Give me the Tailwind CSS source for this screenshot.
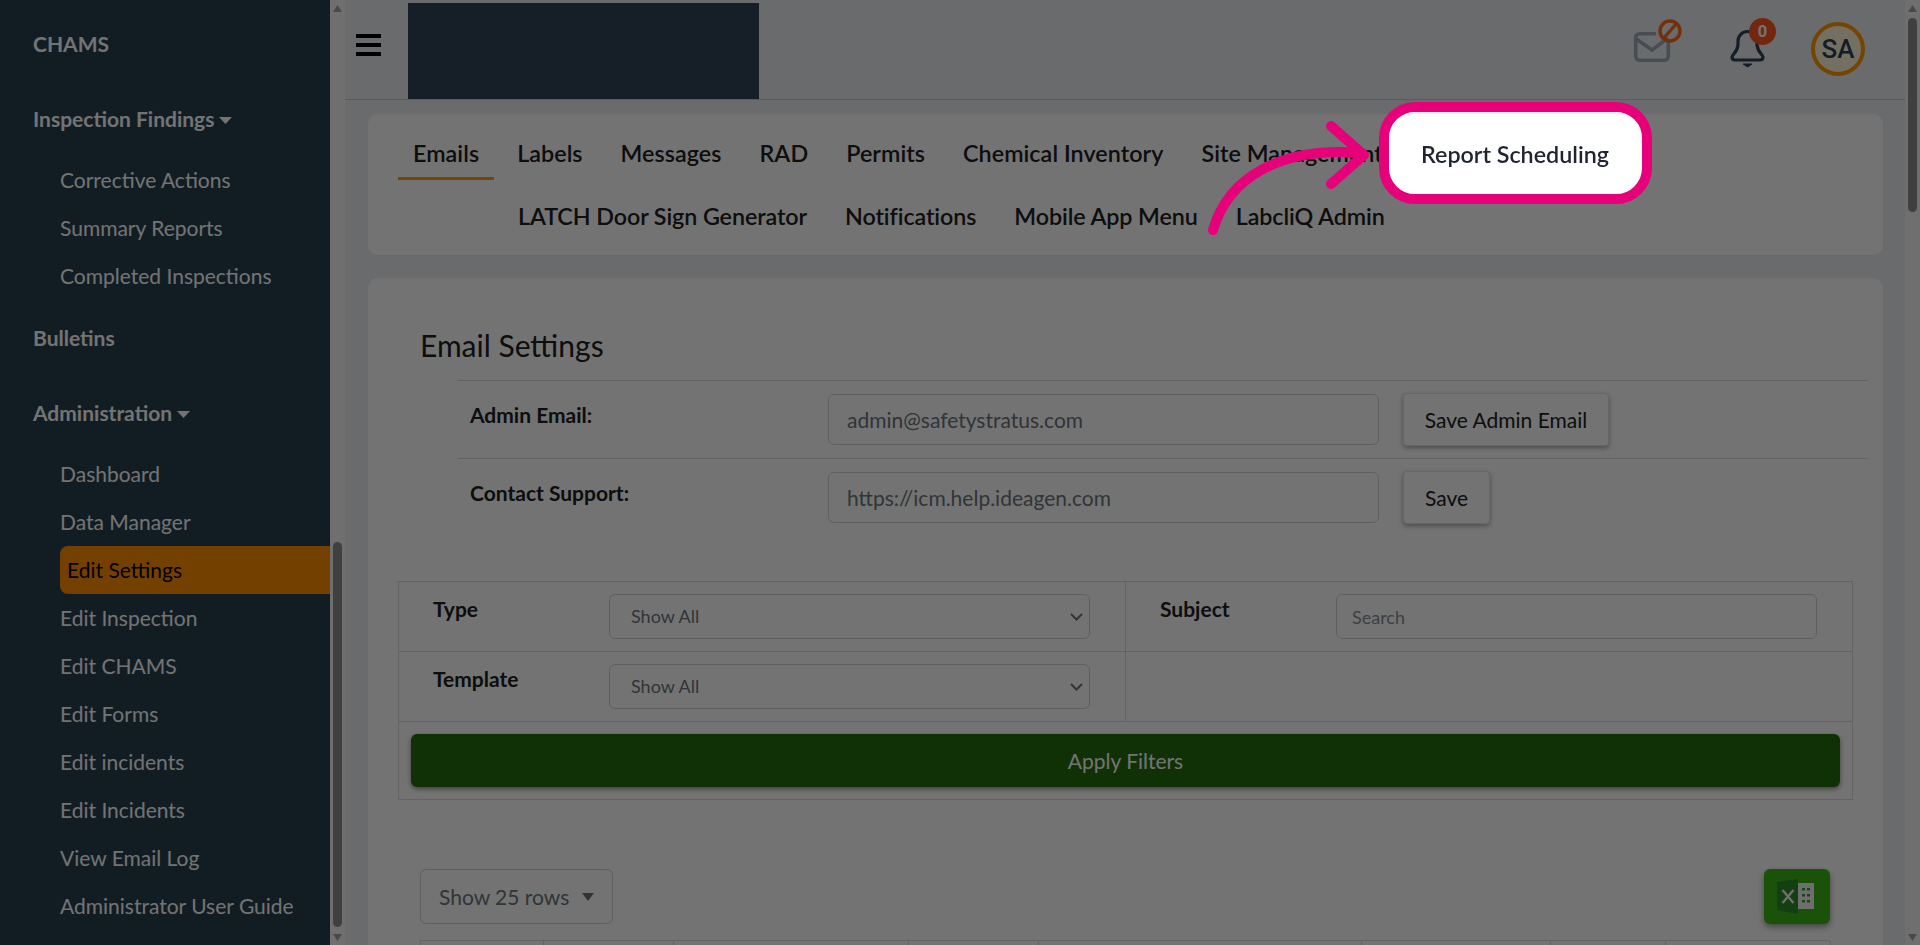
<!DOCTYPE html>
<html lang="en">
<head>
    <meta charset="UTF-8">
    <meta name="viewport" content="width=device-width, initial-scale=1.0">
    <title>Edit Settings</title>
    <script src="https://cdn.jsdelivr.net/npm/@tailwindcss/browser@4"></script>
</head>
<body class="font-['Lato',sans-serif] bg-[#ebeef2] overflow-hidden">
    <div class="flex h-screen overflow-hidden">
        <!-- Sidebar -->
        <aside class="w-[330px] shrink-0 bg-[#28404e] text-white text-[21px] pt-5">
            <a class="flex items-center h-12 pl-[33px] font-bold">CHAMS</a>
            <a class="flex items-center h-12 pl-[33px] mt-[27px] font-bold">Inspection Findings
                <svg class="w-[13px] h-[7px] ml-[5px] mt-0.5" viewBox="0 0 13 7"><path d="M0 0h13L6.5 7z" fill="#fff"/></svg>
            </a>
            <div class="mt-[13px] pl-[60px]">
                <a class="flex items-center h-12">Corrective Actions</a>
                <a class="flex items-center h-12">Summary Reports</a>
                <a class="flex items-center h-12">Completed Inspections</a>
            </div>
            <a class="flex items-center h-12 pl-[33px] mt-[14px] font-bold">Bulletins</a>
            <a class="flex items-center h-12 pl-[33px] mt-[27px] font-bold">Administration
                <svg class="w-[13px] h-[7px] ml-[5px] mt-0.5" viewBox="0 0 13 7"><path d="M0 0h13L6.5 7z" fill="#fff"/></svg>
            </a>
            <div class="mt-[13px] pl-[60px]">
                <a class="flex items-center h-12">Dashboard</a>
                <a class="flex items-center h-12">Data Manager</a>
                <a class="flex items-center h-12 pl-[7px] bg-[#ff8e00] text-black rounded-l-lg">Edit Settings</a>
                <a class="flex items-center h-12">Edit Inspection</a>
                <a class="flex items-center h-12">Edit CHAMS</a>
                <a class="flex items-center h-12">Edit Forms</a>
                <a class="flex items-center h-12">Edit incidents</a>
                <a class="flex items-center h-12">Edit Incidents</a>
                <a class="flex items-center h-12">View Email Log</a>
                <a class="flex items-center h-12">Administrator User Guide</a>
            </div>
        </aside>

        <!-- Sidebar scrollbar -->
        <div class="w-[15px] shrink-0 bg-[#f5f5f5] flex flex-col items-center">
            <svg class="w-[9px] h-[7px] mt-[5px]" viewBox="0 0 9 7"><path d="M4.5 0L9 7H0z" fill="#a3a3a3"/></svg>
            <div class="w-[9px] h-[385px] mt-[530px] rounded-full bg-[#8e8e8e]"></div>
            <svg class="w-[9px] h-[7px] mt-[7px]" viewBox="0 0 9 7"><path d="M4.5 7L9 0H0z" fill="#a3a3a3"/></svg>
        </div>

        <!-- Main -->
        <div class="flex-1 min-w-0 flex flex-col">
            <header class="h-[100px] shrink-0 flex items-end border-b border-[#c8cacc]">
                <button class="w-[25px] self-start mt-[34px] ml-[11px] flex flex-col gap-[5px]">
                    <span class="block h-1 bg-black"></span>
                    <span class="block h-1 bg-black"></span>
                    <span class="block h-1 bg-black"></span>
                </button>
                <div class="w-[351px] h-[96px] ml-[27px] bg-[#314357]"></div>
                <div class="ml-auto self-start flex">
                    <div class="w-[50px] h-[50px] mt-[20px] mr-[47px]">
                        <svg class="w-[50px] h-[50px] overflow-visible" viewBox="0 0 50 50" fill="none">
                            <path d="M24 13.7H7.7a4 4 0 0 0-4 4v18.600a4 4 0 0 0 4 4h24.600a4 4 0 0 0 4-4V22" stroke="#a0aab8" stroke-width="3.600"/>
                            <path d="M3 18l17 12 16-12" stroke="#a0aab8" stroke-width="3.600"/>
                            <circle cx="38" cy="11" r="10" stroke="#ff6a1a" stroke-width="3.400"/>
                            <path d="M31.500 18.500L44.500 3.500" stroke="#ff6a1a" stroke-width="3.400"/>
                        </svg>
                    </div>
                    <div class="relative w-[50px] h-[50px] mt-[20px] mr-[32px]">
                        <svg class="w-[50px] h-[50px]" viewBox="0 0 50 50" fill="none" stroke="#2f4258" stroke-width="3.200" stroke-linejoin="round">
                            <path d="M3 37c0-2.500 5-4 6-12v-4a9.500 9.500 0 0 1 19 0v4c1 8 6 9.500 6 12 0 2-1.500 3-3 3H6c-1.500 0-3-1-3-3z"/>
                            <path d="M14 44h9l-4.500 3z" fill="#2f4258" stroke-width="1"/>
                        </svg>
                        <span class="absolute left-[20px] top-[-2px] w-[27px] h-[27px] rounded-full bg-[#ff5722] text-white font-bold text-[17px] flex items-center justify-center font-['Liberation_Sans',sans-serif]">0</span>
                    </div>
                    <div class="w-[54px] h-[54px] mt-[22px] mr-[40px] rounded-full border-4 border-[#ff9a00] bg-[#fff8d8] text-[#2c3e58] text-[26px] font-medium flex items-center justify-center font-['Roboto',sans-serif]">SA</div>
                </div>
            </header>

            <main class="flex-1 min-h-0 pl-[23px] pr-[22px] pt-[14px]">
                <!-- Tabs -->
                <section class="bg-white rounded-[10px] h-[141px] pt-4 pl-[30px] text-[23.300px] font-semibold text-[#212121]">
                    <nav class="flex gap-2 h-[50px] tracking-[0.06px]">
                        <a class="flex items-center px-[15px] border-b-[3px] border-[#ff9a20]">Emails</a>
                        <a class="flex items-center px-[15px] border-b-[3px] border-transparent">Labels</a>
                        <a class="flex items-center px-[15px] border-b-[3px] border-transparent">Messages</a>
                        <a class="flex items-center px-[15px] border-b-[3px] border-transparent">RAD</a>
                        <a class="flex items-center px-[15px] border-b-[3px] border-transparent">Permits</a>
                        <a class="flex items-center px-[15px] border-b-[3px] border-transparent">Chemical Inventory</a>
                        <a class="flex items-center px-[15px] border-b-[3px] border-transparent">Site Management</a>
                    </nav>
                    <nav class="flex gap-2 h-[50px] mt-[13px] pl-[105px] tracking-[-0.09px]">
                        <a class="flex items-center px-[15px] border-b-[3px] border-transparent">LATCH Door Sign Generator</a>
                        <a class="flex items-center px-[15px] border-b-[3px] border-transparent">Notifications</a>
                        <a class="flex items-center px-[15px] border-b-[3px] border-transparent">Mobile App Menu</a>
                        <a class="flex items-center px-[15px] border-b-[3px] border-transparent">LabcliQ Admin</a>
                    </nav>
                </section>

                <!-- Email settings -->
                <section class="bg-white rounded-[10px] mt-[23px] h-[700px] pt-[47px]">
                    <h1 class="text-[30px] leading-10 text-[#212121] pl-[52px] mb-[15px]">Email Settings</h1>
                    <div class="ml-[90px] mr-[15px]">
                        <div class="h-[78px] border-t border-[#dcdcdc] pt-[13px] pl-[12px] flex items-start">
                            <label class="w-[358px] mt-[9px] leading-6 text-[21px] font-bold text-[#212121]">Admin Email:</label>
                            <input class="w-[551px] h-[51px] px-[18px] border border-[#ced4da] rounded-md text-[21px] text-[#6c757d]" value="admin@safetystratus.com">
                            <button class="ml-6 -mt-px h-[53px] w-[206px] rounded bg-white border border-[#e4e4e4] shadow-[0_2px_5px_rgba(0,0,0,0.35)] text-[21px] text-[#212121]">Save Admin Email</button>
                        </div>
                        <div class="h-[78px] border-t border-[#dcdcdc] pt-[13px] pl-[12px] flex items-start">
                            <label class="w-[358px] mt-[9px] leading-6 text-[21px] font-bold text-[#212121]">Contact Support:</label>
                            <input class="w-[551px] h-[51px] px-[18px] border border-[#ced4da] rounded-md text-[21px] text-[#6c757d]" value="https://icm.help.ideagen.com">
                            <button class="ml-6 -mt-px h-[53px] w-[87px] rounded bg-white border border-[#e4e4e4] shadow-[0_2px_5px_rgba(0,0,0,0.35)] text-[21px] text-[#212121]">Save</button>
                        </div>
                    </div>

                    <!-- Filters -->
                    <div class="ml-[30px] w-[1455px] mt-[45px] border border-[#dcdcdc]">
                        <div class="grid grid-cols-[727px_1fr] h-[70px] border-b border-[#dcdcdc]">
                            <div class="pl-[34px] pt-3 flex items-start border-r border-[#dcdcdc]">
                                <label class="w-[176px] mt-[3px] leading-6 text-[21px] font-bold text-[#212121]">Type</label>
                                <div class="relative w-[481px]">
                                    <select class="w-full h-[45px] pl-[21px] pr-2 appearance-none border border-[#ced4da] rounded-md text-[18px] text-[#6c757d]"><option>Show All</option></select>
                                    <svg class="absolute right-[7px] top-[19px] w-[13px] h-2" viewBox="0 0 13 8" fill="none"><path d="M1 1l5.500 5.500L12 1" stroke="#6c757d" stroke-width="2"/></svg>
                                </div>
                            </div>
                            <div class="pl-[34px] pt-3 flex items-start">
                                <label class="w-[176px] mt-[3px] leading-6 text-[21px] font-bold text-[#212121]">Subject</label>
                                <input class="w-[481px] h-[45px] px-[15px] border border-[#ced4da] rounded-md text-[18px] placeholder:text-[#8a8f94]" placeholder="Search">
                            </div>
                        </div>
                        <div class="grid grid-cols-[727px_1fr] h-[70px] border-b border-[#dcdcdc]">
                            <div class="pl-[34px] pt-3 flex items-start border-r border-[#dcdcdc]">
                                <label class="w-[176px] mt-[3px] leading-6 text-[21px] font-bold text-[#212121]">Template</label>
                                <div class="relative w-[481px]">
                                    <select class="w-full h-[45px] pl-[21px] pr-2 appearance-none border border-[#ced4da] rounded-md text-[18px] text-[#6c757d]"><option>Show All</option></select>
                                    <svg class="absolute right-[7px] top-[19px] w-[13px] h-2" viewBox="0 0 13 8" fill="none"><path d="M1 1l5.500 5.500L12 1" stroke="#6c757d" stroke-width="2"/></svg>
                                </div>
                            </div>
                            <div></div>
                        </div>
                        <div class="h-[77px] px-3 pt-3">
                            <button class="w-full h-[53px] rounded-md bg-[#246d0d] text-white text-[21px] shadow-[0_2px_5px_rgba(0,0,0,0.45)]">Apply Filters</button>
                        </div>
                    </div>

                    <!-- Table toolbar -->
                    <div class="flex justify-between items-start ml-[52px] mr-[53px] mt-[69px]">
                        <button class="w-[193px] h-[55px] pl-[18px] flex items-center border border-[#ced4da] rounded-md text-[21px] text-[#6c757d]">
                            Show 25 rows
                            <svg class="w-3 h-2 ml-[13px]" viewBox="0 0 12 8"><path d="M0 0h12L6 8z" fill="#6c757d"/></svg>
                        </button>
                        <button class="w-[66px] h-[55px] rounded-md bg-[#3cb614] shadow-[0_3px_6px_rgba(0,0,0,0.4)]">
                            <svg class="w-[66px] h-[55px]" viewBox="0 0 66 55">
                                <path d="M34 14h16v26H34z" fill="#f4f4f4"/>
                                <path d="M38 19h3v2.500h-3zM43 19h3v2.500h-3zM38 25h3v2.500h-3zM43 25h3v2.500h-3zM38 31h3v2.500h-3zM43 31h3v2.500h-3z" fill="#3a9a34"/>
                                <path d="M13 13l21-3v35l-21-4z" fill="#2c8c2c"/>
                                <path d="M18.500 21l11 13M29.500 21l-11 13" stroke="#f4f4f4" stroke-width="2.400"/>
                            </svg>
                        </button>
                    </div>

                    <!-- Table header -->
                    <div class="ml-[52px] mt-4 w-[1410px] h-[40px] grid grid-cols-[123px_130px_235px_130px_323px_189px_115px_165px] border-t border-l border-[#dcdcdc]">
                        <div class="border-r border-[#dcdcdc]"></div>
                        <div class="border-r border-[#dcdcdc]"></div>
                        <div class="border-r border-[#dcdcdc]"></div>
                        <div class="border-r border-[#dcdcdc]"></div>
                        <div class="border-r border-[#dcdcdc]"></div>
                        <div class="border-r border-[#dcdcdc]"></div>
                        <div class="border-r border-[#dcdcdc]"></div>
                        <div class="border-r border-[#dcdcdc]"></div>
                    </div>
                </section>
            </main>
        </div>

        <!-- Page scrollbar -->
        <div class="w-[15px] shrink-0 bg-[#f5f5f5] flex flex-col items-center">
            <svg class="w-[9px] h-[7px] mt-[5px]" viewBox="0 0 9 7"><path d="M4.5 0L9 7H0z" fill="#a3a3a3"/></svg>
            <div class="w-[9px] h-[194px] mt-[6px] rounded-full bg-[#8e8e8e]"></div>
            <svg class="w-[9px] h-[7px] mt-auto mb-1" viewBox="0 0 9 7"><path d="M4.5 7L9 0H0z" fill="#a3a3a3"/></svg>
        </div>
    </div>

    <!-- Walkthrough overlay -->
    <div class="fixed inset-0 bg-black/55 z-10"></div>
    <div class="absolute z-20 left-[1379px] top-[102px] w-[273px] h-[102px] border-[10px] border-[#e6007a] rounded-[36px] bg-white overflow-hidden">
        <div class="h-full flex items-center pl-[32px] border-t-2 border-[#ebeef2] text-[23.300px] font-semibold text-[#1f2430]">Report Scheduling</div>
    </div>
    <svg class="absolute z-20 left-0 top-0 w-[1920px] h-[945px] pointer-events-none" viewBox="0 0 1920 945" fill="none" stroke="#e6007a" stroke-width="10" stroke-linecap="round" stroke-linejoin="round">
        <path d="M1213 230C1228 178 1280 146 1362 153"/>
        <path d="M1331 126L1364 155L1331 184"/>
    </svg>
</body>
</html>
